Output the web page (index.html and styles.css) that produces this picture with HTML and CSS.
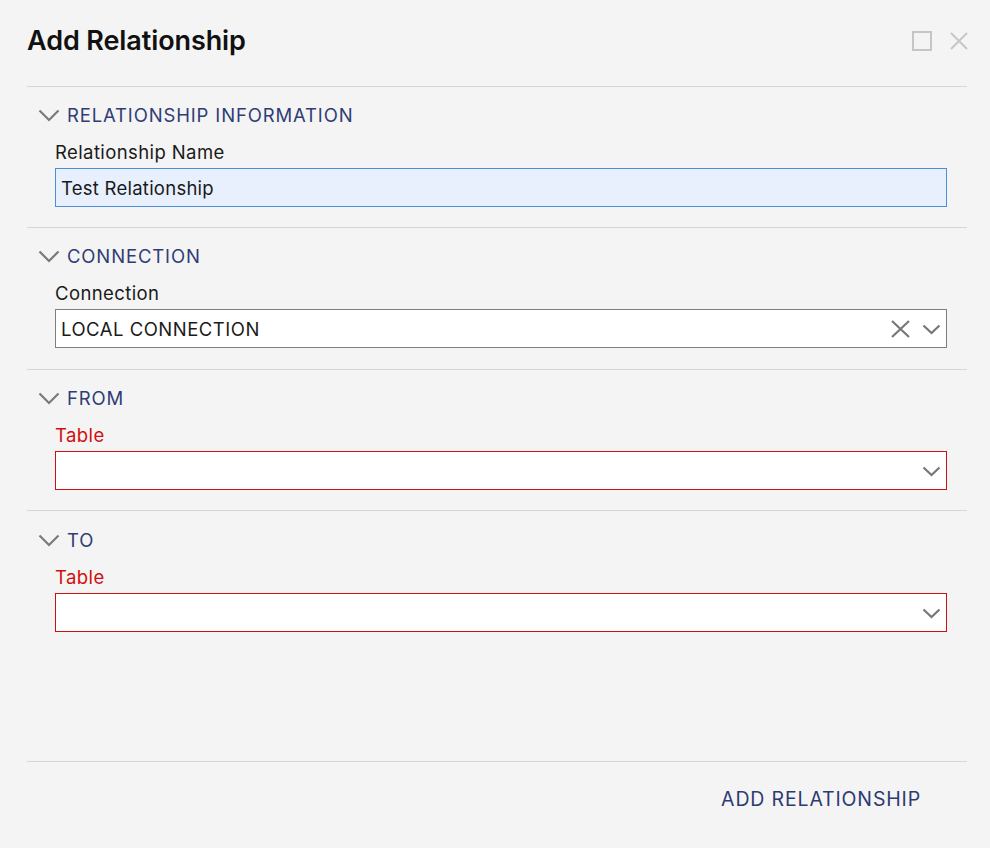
FILE: index.html
```html
<!DOCTYPE html>
<html>
<head>
<meta charset="utf-8">
<link rel="stylesheet" href="styles.css">
</head>
<body>
<div class="dialog">
  <div class="titlebar">
    <h1 class="title">Add Relationship</h1>
    <div class="win-icons">
      <span class="icon-max"></span>
      <svg class="icon-close" width="18" height="18" viewBox="0 0 18 18"><path d="M1 1 L17 17 M17 1 L1 17" stroke="#c6c6c6" stroke-width="2" fill="none"/></svg>
    </div>
  </div>

  <div class="section">
    <div class="sec-head">
      <svg class="chev" width="22" height="13" viewBox="0 0 22 13"><path d="M1.5 1.5 L11 11 L20.5 1.5" stroke="#7a7a7a" stroke-width="2.2" fill="none"/></svg>
      <span>RELATIONSHIP INFORMATION</span>
    </div>
    <div class="field">
      <label class="label">Relationship Name</label>
      <div class="input focus">Test Relationship</div>
    </div>
  </div>

  <div class="section tall">
    <div class="sec-head">
      <svg class="chev" width="22" height="13" viewBox="0 0 22 13"><path d="M1.5 1.5 L11 11 L20.5 1.5" stroke="#7a7a7a" stroke-width="2.2" fill="none"/></svg>
      <span>CONNECTION</span>
    </div>
    <div class="field">
      <label class="label">Connection</label>
      <div class="input select">
        <span class="value caps">LOCAL CONNECTION</span>
        <svg class="clear" width="19" height="18" viewBox="0 0 19 18"><path d="M1 1 L18 17 M18 1 L1 17" stroke="#777" stroke-width="2.2" fill="none"/></svg>
        <svg class="caret" width="19" height="11" viewBox="0 0 19 11"><path d="M1.5 1.5 L9.5 9 L17.5 1.5" stroke="#777" stroke-width="2.2" fill="none"/></svg>
      </div>
    </div>
  </div>

  <div class="section">
    <div class="sec-head">
      <svg class="chev" width="22" height="13" viewBox="0 0 22 13"><path d="M1.5 1.5 L11 11 L20.5 1.5" stroke="#7a7a7a" stroke-width="2.2" fill="none"/></svg>
      <span>FROM</span>
    </div>
    <div class="field">
      <label class="label error">Table</label>
      <div class="input select invalid">
        <span class="value"></span>
        <svg class="caret" width="19" height="11" viewBox="0 0 19 11"><path d="M1.5 1.5 L9.5 9 L17.5 1.5" stroke="#777" stroke-width="2.2" fill="none"/></svg>
      </div>
    </div>
  </div>

  <div class="section last">
    <div class="sec-head">
      <svg class="chev" width="22" height="13" viewBox="0 0 22 13"><path d="M1.5 1.5 L11 11 L20.5 1.5" stroke="#7a7a7a" stroke-width="2.2" fill="none"/></svg>
      <span>TO</span>
    </div>
    <div class="field">
      <label class="label error">Table</label>
      <div class="input select invalid">
        <span class="value"></span>
        <svg class="caret" width="19" height="11" viewBox="0 0 19 11"><path d="M1.5 1.5 L9.5 9 L17.5 1.5" stroke="#777" stroke-width="2.2" fill="none"/></svg>
      </div>
    </div>
  </div>

  <div class="footer">
    <button class="btn">ADD RELATIONSHIP</button>
  </div>
</div>
</body>
</html>
```

FILE: styles.css
```css
html, body {
  margin: 0;
  padding: 0;
  background: #f4f4f4;
}
body {
  font-family: "Inter", "Lato", sans-serif;
  color: #1a1a1a;
  width: 990px;
  height: 848px;
  overflow: hidden;
}
.dialog {
  padding: 0 23px 0 27px;
  display: flex;
  flex-direction: column;
  height: 848px;
  box-sizing: border-box;
}
.titlebar {
  height: 87px;
  display: flex;
  align-items: center;
  justify-content: space-between;
  border-bottom: 1px solid #d6d6d6;
  box-sizing: border-box;
  padding-bottom: 5px;
}
.title {
  margin: 0;
  font-size: 27px;
  font-weight: 600;
  color: #111;
  letter-spacing: -0.1px;
}
.win-icons {
  display: flex;
  align-items: center;
  gap: 18px;
  margin-right: -1px;
}
.icon-max {
  width: 16px;
  height: 16px;
  border: 2px solid #c6c6c6;
  display: block;
}
.icon-close { display: block; }
.section {
  border-bottom: 1px solid #d6d6d6;
  padding: 16px 0 20px;
}
.section.tall { padding-bottom: 21px; }
.section.last {
  border-bottom: none;
  flex: 1;
  padding-top: 17px;
}
.sec-head {
  display: flex;
  align-items: center;
  height: 24px;
  color: #303d74;
  font-size: 18.5px;
  letter-spacing: 0.85px;
  padding-left: 11px;
}
.chev {
  margin-right: 7px;
  margin-top: 1px;
}
.field {
  padding: 0 20px 0 28px;
  margin-top: 15px;
}
.label {
  display: block;
  font-size: 18.5px;
  letter-spacing: 0.4px;
  line-height: 20px;
  height: 20px;
  color: #1a1a1a;
  margin-bottom: 6px;
}
.label.error { color: #d10f0f; }
.input {
  height: 39px;
  box-sizing: border-box;
  border: 1px solid #7f7f7f;
  background: #fff;
  font-size: 18.5px;
  letter-spacing: 0.25px;
  display: flex;
  align-items: center;
  padding: 0 5px;
  color: #1a1a1a;
}
.input.focus {
  background: #e8f0fe;
  border-color: #4a8fdb;
}
.input.invalid { border-color: #cc1111; }
.select .value { flex: 1; }
.select .caps { letter-spacing: 0.5px; }
.select .clear { margin-right: 12px; }
.select .caret { margin-right: 0; margin-top: 2px; }
.footer {
  border-top: 1px solid #d6d6d6;
  height: 87px;
  box-sizing: border-box;
  display: flex;
  align-items: flex-start;
  justify-content: flex-end;
  padding-top: 25px;
}
.btn {
  background: none;
  border: none;
  font-family: inherit;
  font-size: 19.5px;
  line-height: 24px;
  color: #2e3b72;
  letter-spacing: 0.85px;
  padding: 0 46px 0 0;
  cursor: pointer;
}
```
